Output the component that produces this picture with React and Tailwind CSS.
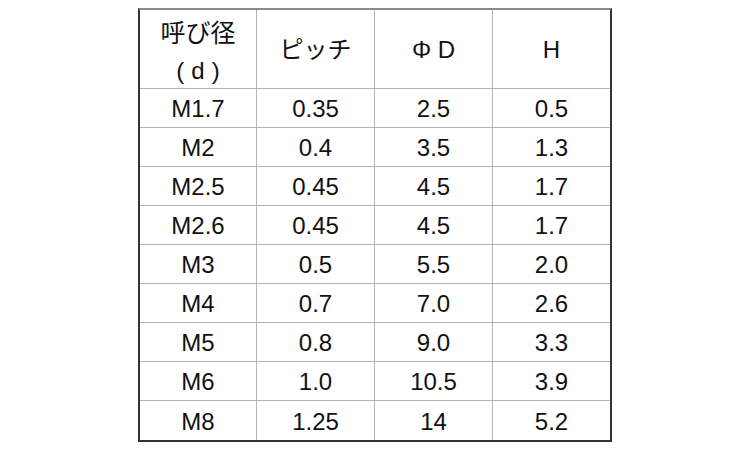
import React from 'react';

const rows = [
  ['M1.7', '0.35', '2.5', '0.5'],
  ['M2', '0.4', '3.5', '1.3'],
  ['M2.5', '0.45', '4.5', '1.7'],
  ['M2.6', '0.45', '4.5', '1.7'],
  ['M3', '0.5', '5.5', '2.0'],
  ['M4', '0.7', '7.0', '2.6'],
  ['M5', '0.8', '9.0', '3.3'],
  ['M6', '1.0', '10.5', '3.9'],
  ['M8', '1.25', '14', '5.2'],
];

const font = { fontFamily: '"Liberation Sans", "Noto Sans CJK JP", sans-serif' };

export default function App() {
  return (
    <div className="w-[750px] h-[450px] bg-white flex justify-center" style={font}>
      <div className="mt-[8px] w-[474px] h-[434px] border-t-2 border-t-[#8a8a8a] border-x-2 border-b-2 border-x-[#333] border-b-[#333] text-[#111]">
        {/* header */}
        <div className="grid grid-cols-[117px_118px_118px_117px] h-[79px] border-b border-[#b4b4b4]">
          <div className="border-r border-[#b4b4b4] flex flex-col items-center justify-center pt-[4px] text-[25px] leading-[38px]">
            <span>呼び径</span>
            <span className="flex gap-[7px] text-[24px]">
              <span>(</span>
              <span>d</span>
              <span>)</span>
            </span>
          </div>
          <div className="border-r border-[#b4b4b4] flex items-center justify-center text-[24px]">ピッチ</div>
          <div className="border-r border-[#b4b4b4] flex items-center justify-center text-[24px]">Φ D</div>
          <div className="flex items-center justify-center text-[24px]">H</div>
        </div>
        {rows.map((r, i) => (
          <div
            key={r[0]}
            className={
              i === rows.length - 1
                ? 'grid grid-cols-[117px_118px_118px_117px] h-[39px]'
                : 'grid grid-cols-[117px_118px_118px_117px] h-[39px] border-b border-[#b4b4b4]'
            }
          >
            {r.map((c, j) => (
              <div
                key={j}
                className={
                  j < 3
                    ? 'border-r border-[#b4b4b4] flex items-center justify-center pt-[2px] text-[24px]'
                    : 'flex items-center justify-center pt-[2px] text-[24px]'
                }
              >
                {c}
              </div>
            ))}
          </div>
        ))}
      </div>
    </div>
  );
}
